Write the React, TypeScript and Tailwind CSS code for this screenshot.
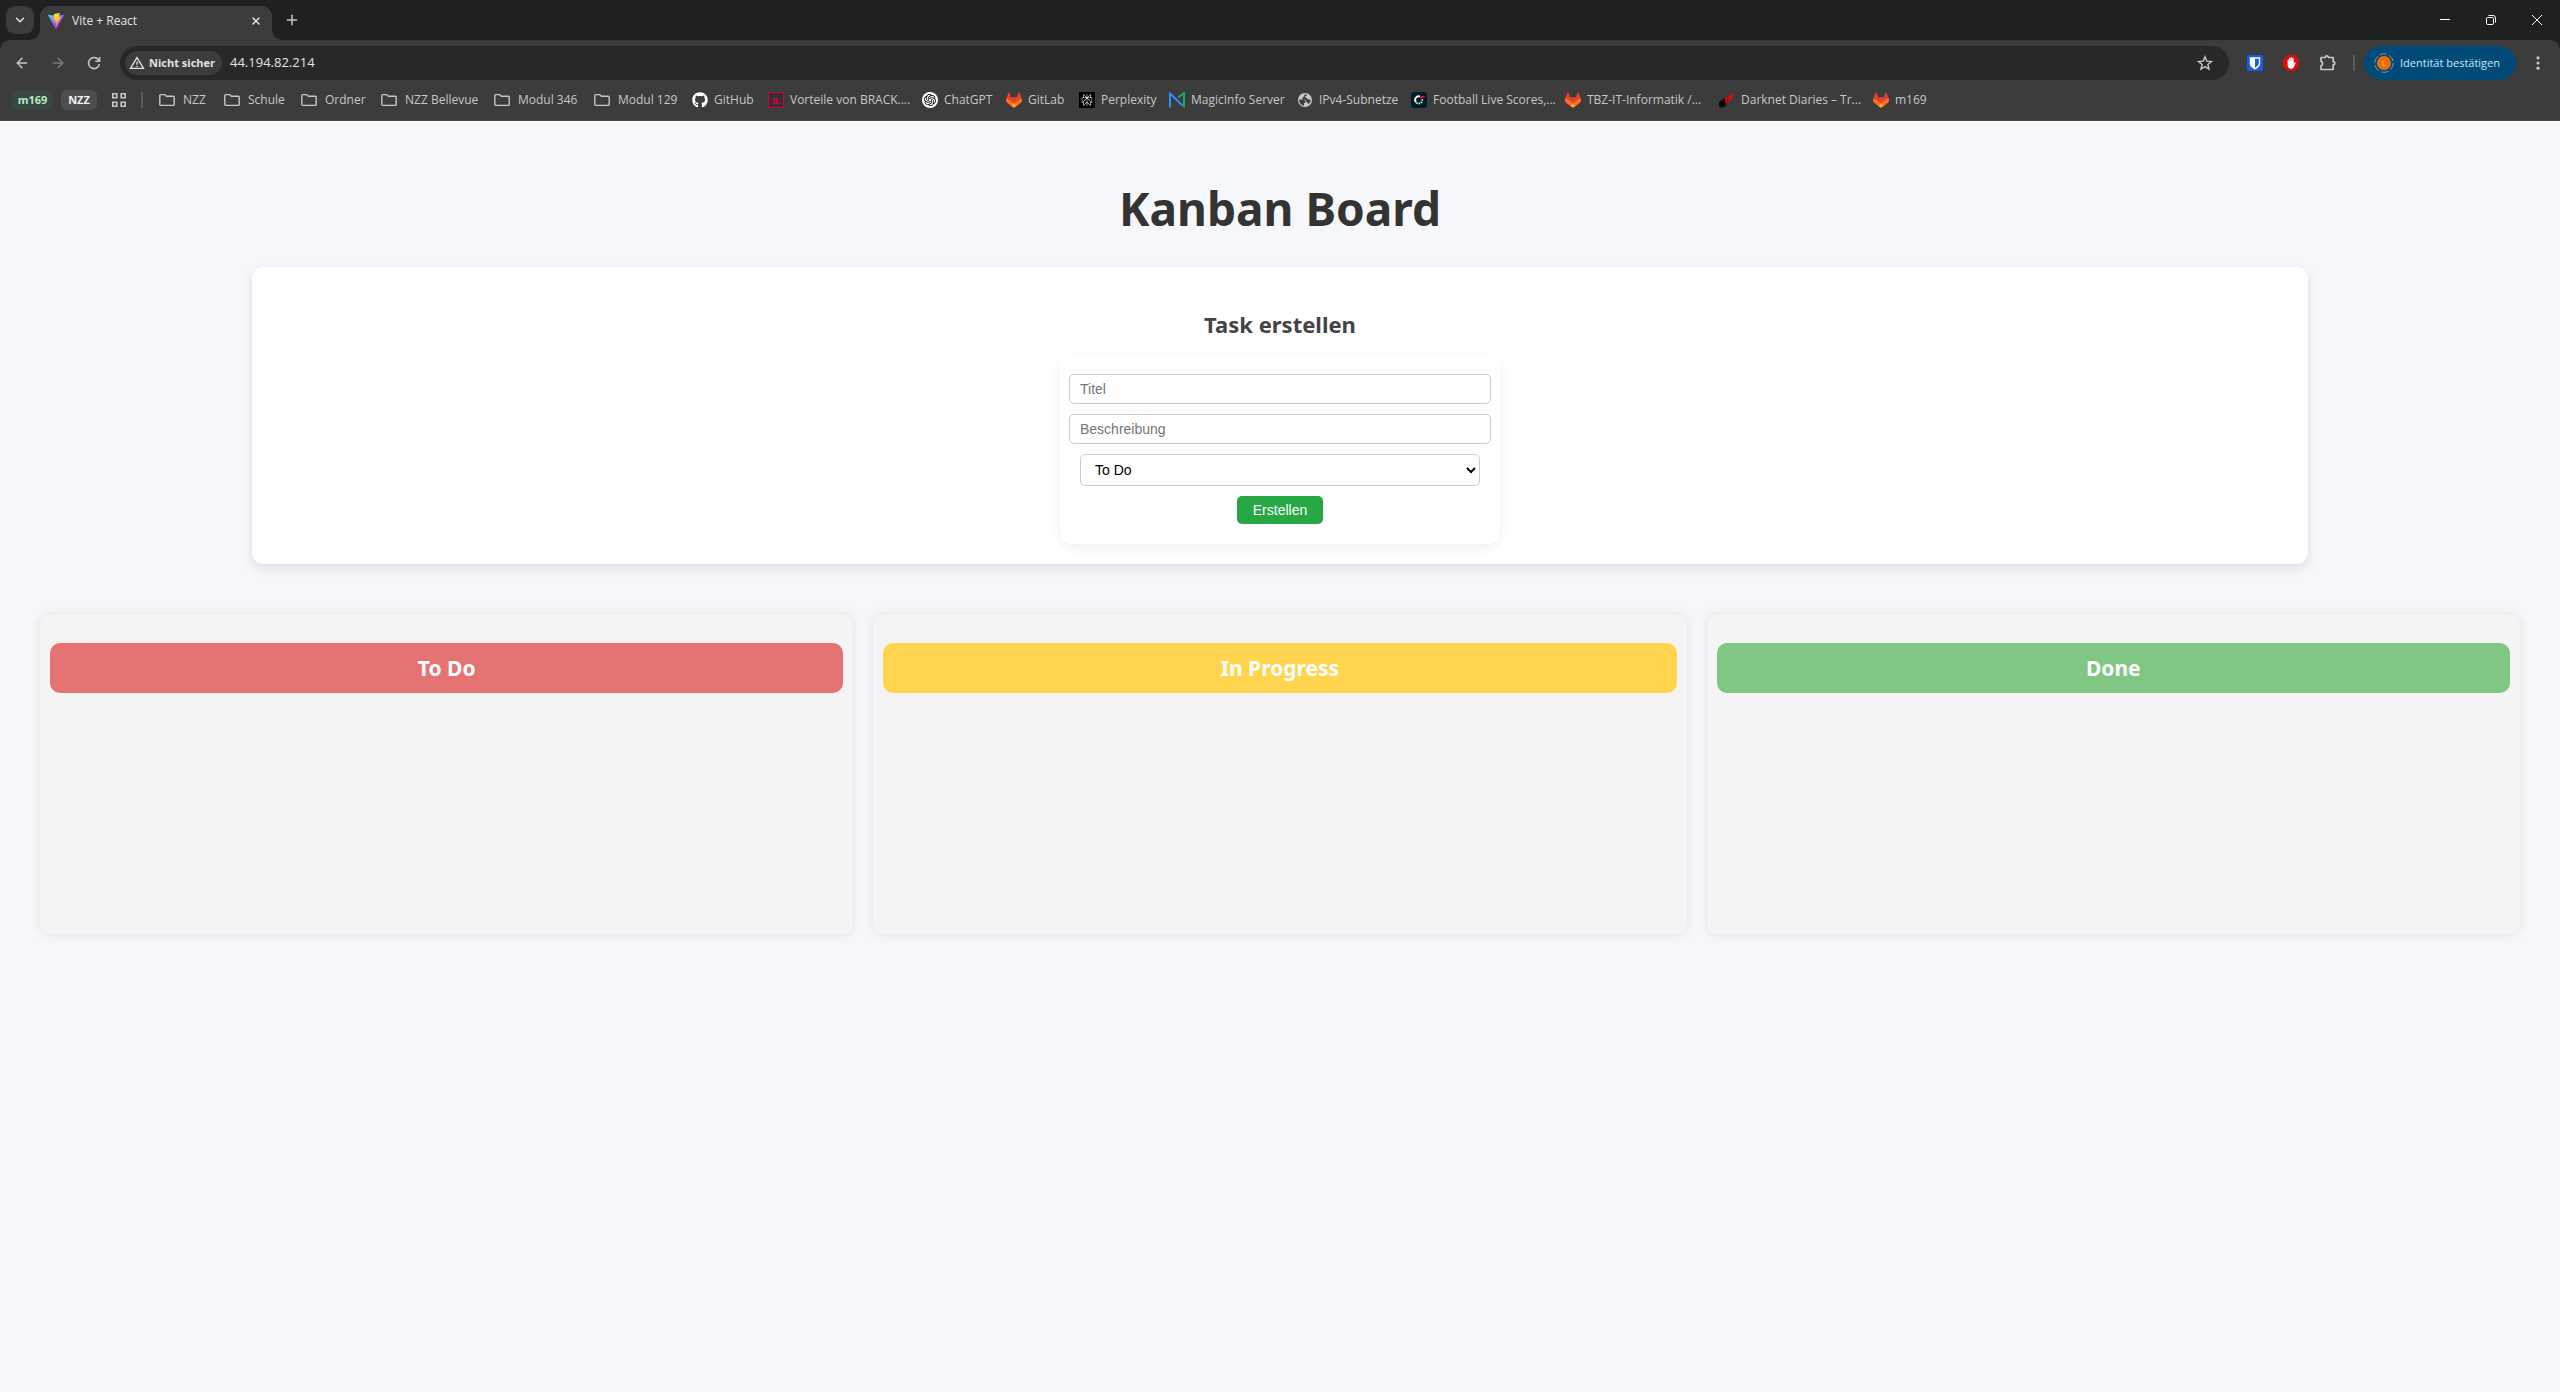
import React, { useState } from "react";
import { ArrowLeft, ArrowRight, ChevronDown, Plus, X } from "lucide-react";
import { FaGithub } from "react-icons/fa";
import { SiOpenai, SiPerplexity } from "react-icons/si";

function ViteLogo() {
  return (
    <svg viewBox="0 0 256 257" className="size-4 shrink-0" aria-hidden="true">
      <defs>
        <linearGradient id="viteA" x1="-.8%" x2="57.6%" y1="7.7%" y2="78.4%">
          <stop offset="0%" stopColor="#41D1FF" />
          <stop offset="100%" stopColor="#BD34FE" />
        </linearGradient>
        <linearGradient id="viteB" x1="43.4%" x2="50.3%" y1="2.2%" y2="89%">
          <stop offset="0%" stopColor="#FFEA83" />
          <stop offset="8.3%" stopColor="#FFDD35" />
          <stop offset="100%" stopColor="#FFA800" />
        </linearGradient>
      </defs>
      <path
        fill="url(#viteA)"
        d="M255.153 37.938L134.897 252.976c-2.483 4.44-8.862 4.466-11.382.048L.875 37.958c-2.746-4.814 1.371-10.646 6.827-9.67l120.385 21.517a6.537 6.537 0 0 0 2.322-.004l117.867-21.483c5.438-.991 9.574 4.796 6.877 9.62Z"
      />
      <path
        fill="url(#viteB)"
        d="M185.432.063L96.44 17.501a3.268 3.268 0 0 0-2.634 3.014l-5.474 92.456a3.268 3.268 0 0 0 3.997 3.378l24.777-5.718c2.318-.535 4.413 1.507 3.936 3.838l-7.361 36.047c-.495 2.426 1.782 4.5 4.151 3.78l15.304-4.649c2.372-.72 4.652 1.36 4.15 3.788l-11.698 56.621c-.732 3.542 3.979 5.473 5.943 2.437l1.313-2.028l72.516-144.72c1.215-2.423-.88-5.186-3.54-4.672l-25.505 4.922c-2.396.462-4.435-1.77-3.759-4.114l16.646-57.705c.677-2.35-1.37-4.583-3.769-4.113Z"
      />
    </svg>
  );
}

function FolderIcon() {
  return (
    <svg viewBox="0 0 16 16" className="size-4 shrink-0" fill="none" stroke="#c7c7c7" strokeWidth="1.4" aria-hidden="true">
      <path d="M.8 3.6c0-.6.4-1 1-1h3.9l1.7 1.7h6.8c.6 0 1 .4 1 1v7.1c0 .6-.4 1-1 1H1.800c-.6 0-1-.4-1-1Z" />
    </svg>
  );
}

function GitlabIcon() {
  return (
    <svg viewBox="0 0 24 24" className="size-4 shrink-0" aria-hidden="true">
      <path fill="#e24329" d="m23.600 9.590-.03-.08L20.300.98a.85.85 0 0 0-1.63.09l-2.200 6.740H7.530L5.330 1.070A.85.85 0 0 0 3.700.98L.430 9.500l-.03.090a6.070 6.070 0 0 0 2.010 7.010l9.590 7.200 9.590-7.200a6.070 6.070 0 0 0 2.010-7.010Z" />
      <path fill="#fc6d26" d="M23.600 9.590a11 11 0 0 0-4.440 2L12 17l4.500 3.500 5.090-3.900a6.070 6.070 0 0 0 2.010-7.010ZM.400 9.590a11 11 0 0 1 4.440 2L12 17l-4.500 3.500-5.090-3.900A6.070 6.070 0 0 1 .4 9.590Z" />
      <path fill="#fca326" d="M12 17l-4.560 3.440L12 23.800l4.560-3.360Z" />
    </svg>
  );
}

function BrackIcon() {
  return (
    <svg viewBox="0 0 16 16" className="size-4 shrink-0" aria-hidden="true">
      <rect x=".5" y=".5" width="15" height="15" fill="#33303a" stroke="#d5003f" />
      <text x="4" y="11.500" fontSize="9" fontWeight="700" fill="#d5003f">B.</text>
    </svg>
  );
}

function MagicIcon() {
  return (
    <svg viewBox="0 0 16 16" className="size-4 shrink-0" fill="none" aria-hidden="true">
      <path stroke="#1faa55" strokeWidth="2" d="M9 5.500 15 1v14.500" />
      <path stroke="#2f8bff" strokeWidth="2" d="M1 15.500V1.500l12.500 12" />
    </svg>
  );
}

function GlobeIcon() {
  return (
    <svg viewBox="0 0 16 16" className="size-4 shrink-0" aria-hidden="true">
      <circle cx="8" cy="8" r="7" fill="#c7c9cc" />
      <path fill="#3c3c3c" d="M2.200 7.400H6c1.600 0 2.600.9 2.600 2.200 0 .9-.6 1.300-1.500 1.500v2.500C4.200 13.300 2 10.700 2.200 7.400ZM7.400 2.600h2.400c.1 1-.5 1.600-1.400 1.700v1.400c1.700 0 2.200.8 2.300 1.900h2.900c.1 2-.8 3.700-2.300 4.800-.1-1.500-.7-2-1.900-2.100 0-2-.9-3-2.900-3H5.300c0-2.100.9-2.600 2.100-2.700Z" />
    </svg>
  );
}

function FootballIcon() {
  return (
    <svg viewBox="0 0 16 16" className="size-4 shrink-0" fill="none" aria-hidden="true">
      <rect width="16" height="16" rx="3" fill="#001e28" />
      <path stroke="#fff" strokeWidth="1.800" d="M9 4.500A3.600 3.600 0 0 0 5 10.200" />
      <path stroke="#fff" strokeWidth="1.800" strokeDasharray="1.300 1" d="M5.500 10.800A3.600 3.600 0 0 0 11.200 7.500" />
      <path fill="#ff0046" d="m8.600 6.600 1.200-2.600h4.600l-1.200 1.600Z" />
    </svg>
  );
}

function DarknetIcon() {
  return (
    <svg viewBox="0 0 16 16" className="size-4 shrink-0" aria-hidden="true">
      <path fill="#0a0a0a" d="m0 10 6-4 3 4-2 4-5 2-2-2Z" />
      <path fill="#e00b0b" d="m6 6 3-1 1-3 1 2 5-4-3 5 1 0-3 3 .5 2-2.500-1-2 5-.5-4Z" />
      <path fill="#1a1a1a" d="m8 7 2-1-1 3Z" />
    </svg>
  );
}

function ChatGptIcon() {
  return (
    <span className="grid size-4 shrink-0 place-items-center rounded-full bg-white text-black">
      <SiOpenai size={12} aria-hidden="true" />
    </span>
  );
}

function PerplexityIcon() {
  return (
    <span className="grid size-4 shrink-0 place-items-center bg-black text-[#e8e8e0]">
      <SiPerplexity size={12} aria-hidden="true" />
    </span>
  );
}

const folders = [
  { label: "NZZ", width: "w-[65px]" },
  { label: "Schule", width: "w-[77px]" },
  { label: "Ordner", width: "w-[80px]" },
  { label: "NZZ Bellevue", width: "w-[113px]" },
  { label: "Modul 346", width: "w-[100px]" },
  { label: "Modul 129", width: "w-[98px]" },
];

const sites = [
  { label: "GitHub", width: "w-[76px]", icon: <FaGithub size={16} className="shrink-0 text-white" aria-hidden="true" /> },
  { label: "Vorteile von BRACK....", width: "w-[154px]", icon: <BrackIcon /> },
  { label: "ChatGPT", width: "w-[84px]", icon: <ChatGptIcon /> },
  { label: "GitLab", width: "w-[73px]", icon: <GitlabIcon /> },
  { label: "Perplexity", width: "w-[90px]", icon: <PerplexityIcon /> },
  { label: "MagicInfo Server", width: "w-[128px]", icon: <MagicIcon /> },
  { label: "IPv4-Subnetze", width: "w-[114px]", icon: <GlobeIcon /> },
  { label: "Football Live Scores,...", width: "w-[154px]", icon: <FootballIcon /> },
  { label: "TBZ-IT-Informatik /...", width: "w-[154px]", icon: <GitlabIcon /> },
  { label: "Darknet Diaries – Tr...", width: "w-[154px]", icon: <DarknetIcon /> },
  { label: "m169", width: "w-[60px]", icon: <GitlabIcon /> },
];

function TabStrip() {
  return (
    <div className="flex h-10 items-end bg-[#1f2020] pl-1.5">
      <button aria-label="Tabs durchsuchen" className="mb-1.5 grid size-7 place-items-center rounded-[9px] bg-[#3c3c3c] text-[#e3e3e3]">
        <ChevronDown size={14} strokeWidth={2.5} />
      </button>
      <div className="relative ml-1.5 flex h-[34px] w-[232px] items-center rounded-t-[10px] bg-[#3c3c3c] pr-2.5 pb-1 pl-2">
        <svg viewBox="0 0 10 10" className="absolute bottom-0 -left-2.5 size-2.5" aria-hidden="true">
          <path fill="#3c3c3c" d="M10 0v10H0A10 10 0 0 0 10 0Z" />
        </svg>
        <svg viewBox="0 0 10 10" className="absolute -right-2.5 bottom-0 size-2.5" aria-hidden="true">
          <path fill="#3c3c3c" d="M0 0v10h10A10 10 0 0 1 0 0Z" />
        </svg>
        <ViteLogo />
        <span className="ml-2 flex-1 text-xs text-[#e3e3e3]">Vite + React</span>
        <button aria-label="Tab schließen" className="text-[#e3e3e3]">
          <X size={12} strokeWidth={3} />
        </button>
      </div>
      <button aria-label="Neuer Tab" className="mb-3 ml-3 text-[#c7c7c7]">
        <Plus size={16} strokeWidth={2.2} />
      </button>
      <div className="ml-auto flex h-10 text-white">
        <button aria-label="Minimieren" className="grid w-[46px] place-items-center">
          <svg viewBox="0 0 10 10" className="size-2.5" stroke="currentColor"><path d="M0 4.500h10" /></svg>
        </button>
        <button aria-label="Verkleinern" className="grid w-[46px] place-items-center">
          <svg viewBox="0 0 10 10" className="size-2.5 overflow-visible" fill="none" stroke="currentColor">
            <rect x=".5" y="2.500" width="7" height="7" rx="1.200" />
            <path d="M2.500.5h4.500a2.500 2.500 0 0 1 2.500 2.500v4.500" />
          </svg>
        </button>
        <button aria-label="Schließen" className="grid w-[46px] place-items-center">
          <svg viewBox="0 0 10 10" className="size-2.5" stroke="currentColor"><path d="m0 0 10 10M10 0 0 10" /></svg>
        </button>
      </div>
    </div>
  );
}

function Toolbar() {
  return (
    <div className="flex h-[46px] items-center pr-3.5 pl-3.5">
      <button aria-label="Zurück" className="text-[#c7c7c7]"><ArrowLeft size={16} strokeWidth={2.2} /></button>
      <button aria-label="Vorwärts" className="ml-5 text-[#7a7a7a]"><ArrowRight size={16} strokeWidth={2.2} /></button>
      <button aria-label="Neu laden" className="ml-5 text-[#c7c7c7]">
        <svg viewBox="0 0 16 16" className="size-4" fill="none" stroke="currentColor" strokeWidth="1.600" aria-hidden="true">
          <path d="M13.400 9.200A5.500 5.500 0 1 1 12.300 4.600L13.500 6M13.600 2v4.300H9.300" />
        </svg>
      </button>
      <div className="ml-[18px] flex h-[34px] flex-1 items-center rounded-full bg-[#282828] pr-4 pl-[5px]">
        <button className="flex h-6 w-[97px] items-center gap-1 rounded-full bg-[#3c3c3c] pl-1 text-[11px] font-bold whitespace-nowrap text-[#e3e3e3]">
          <svg viewBox="0 0 16 16" className="size-4 shrink-0" fill="none" stroke="currentColor" strokeWidth="1.300" aria-hidden="true">
            <path d="M8 2.600 14.500 13.400H1.500ZM8 6.500v3.300M8 10.800v1.300" />
          </svg>
          Nicht sicher
        </button>
        <input aria-label="Adresse" defaultValue="44.194.82.214" className="ml-2 min-w-0 flex-1 bg-transparent text-[13px] text-[#e3e3e3] outline-none" />
        <button aria-label="Lesezeichen hinzufügen" className="text-[#c7c7c7]">
          <svg viewBox="0 0 16 16" className="size-4" fill="none" stroke="currentColor" strokeWidth="1.400" aria-hidden="true">
            <path d="m8 1.800 1.800 4.300 4.700.4-3.600 3 1.100 4.600L8 11.600l-4 2.500 1.100-4.600-3.600-3 4.700-.4Z" />
          </svg>
        </button>
      </div>
      <button aria-label="Bitwarden" className="ml-[18px]">
        <svg viewBox="0 0 16 16" className="size-4" aria-hidden="true">
          <rect width="16" height="16" rx="2" fill="#175ddc" />
          <path fill="#fff" d="M2.800 2.200h10.400v6.200c0 2.800-2.600 4.700-5.200 6-2.600-1.300-5.200-3.200-5.200-6Z" />
          <path fill="#175ddc" d="M8 3.700h3.800v4.600c0 1.800-1.600 3.200-3.800 4.400Z" />
        </svg>
      </button>
      <button aria-label="AdBlock" className="ml-5">
        <svg viewBox="0 0 16 16" className="size-4" aria-hidden="true">
          <path fill="#e50b0b" d="M4.700 0h6.600L16 4.700v6.600L11.300 16H4.700L0 11.300V4.700Z" />
          <path fill="#fff" d="M4.600 5.200c0-.9 1.300-.9 1.300 0v1.900h.2V3.500c0-1 1.400-1 1.400 0V6.500h.2V2.900c0-1 1.400-1 1.400 0v3.700h.2V3.700c0-1 1.400-1 1.400 0v5l.4-.9c.5-.9 1.900-.5 1.400.6l-1.500 3.400c-.5 1.200-1.400 1.900-2.800 1.900-2.200 0-3.600-1.200-3.600-3.400Z" />
        </svg>
      </button>
      <button aria-label="Erweiterungen" className="ml-5 text-[#c7c7c7]">
        <svg viewBox="0 0 18 18" className="size-[18px]" fill="none" stroke="currentColor" strokeWidth="1.700" strokeLinejoin="round" aria-hidden="true">
          <path d="M2 3.500h4.200a1.600 1.600 0 0 1 3.200 0h4.800v4.200a1.600 1.600 0 0 1 0 3.200v4.600H2v-3.700a2.300 2.300 0 0 0 0-4.400Z" />
        </svg>
      </button>
      <span className="ml-4 h-4 w-0.5 bg-[#5c5c5c]" />
      <button className="ml-[9px] flex h-[34px] w-[152px] items-center rounded-full bg-[#004a77] pl-2.5 text-[11px] whitespace-nowrap text-[#c2e7ff]">
        <svg viewBox="0 0 20 20" className="mr-1.5 size-5 shrink-0" aria-hidden="true">
          <circle cx="10" cy="10" r="9.300" fill="none" stroke="#7f99a8" strokeWidth="1" strokeDasharray="7.300 2.440" />
          <circle cx="10" cy="10" r="7" fill="#ef6c00" />
          <text x="10" y="13" textAnchor="middle" fontSize="8" fill="#ffe0b2">L</text>
        </svg>
        Identität bestätigen
      </button>
      <button aria-label="Menü" className="ml-3.5 text-[#c7c7c7]">
        <svg viewBox="0 0 16 16" className="size-4" fill="currentColor" aria-hidden="true">
          <circle cx="8" cy="2.800" r="1.600" /><circle cx="8" cy="8" r="1.600" /><circle cx="8" cy="13.200" r="1.600" />
        </svg>
      </button>
    </div>
  );
}

function BookmarksBar() {
  return (
    <nav aria-label="Lesezeichen" className="flex h-[35px] items-center overflow-hidden border-b border-[#474747] pb-1.5 pl-3 text-xs whitespace-nowrap text-[#c7c7c7]">
      <button className="h-5 w-[41px] shrink-0 rounded-md bg-[#37493e] text-[11px] font-bold text-[#b9e8c4]">m169</button>
      <button className="ml-2 h-5 w-9 shrink-0 rounded-md bg-[#4d4e51] text-[11px] font-bold text-[#f1f3f4]">NZZ</button>
      <button aria-label="Tab-Gruppen" className="ml-[15px] shrink-0">
        <svg viewBox="0 0 14 14" className="size-3.5" fill="none" stroke="currentColor" strokeWidth="1.600" aria-hidden="true">
          <path d="M.8.8h4v4h-4ZM9.200.8h4v4h-4ZM.8 9.200h4v4h-4ZM9.200 9.200h4v4h-4Z" />
        </svg>
      </button>
      <span className="mr-4 ml-[15px] h-4 w-0.5 shrink-0 bg-[#5c5c5c]" />
      {folders.map((f) => (
        <button key={f.label} className={`flex shrink-0 items-center gap-2 ${f.width}`}>
          <FolderIcon />
          {f.label}
        </button>
      ))}
      {sites.map((s, i) => (
        <a key={i} href="#" className={`flex shrink-0 items-center gap-1.5 ${s.width}`}>
          {s.icon}
          {s.label}
        </a>
      ))}
    </nav>
  );
}

const columns = [
  { title: "To Do", color: "bg-[#e57373]" },
  { title: "In Progress", color: "bg-[#ffd54f]" },
  { title: "Done", color: "bg-[#81c784]" },
];

function TaskForm() {
  const [status, setStatus] = useState("To Do");
  const field = "h-[30px] w-[422px] rounded-[5px] border border-[#ccc] bg-white px-2.5 placeholder:text-[#757575]";
  return (
    <form
      onSubmit={(e) => e.preventDefault()}
      className='mx-auto flex w-[440px] flex-col items-center gap-2.5 rounded-xl bg-white py-5 font-["Liberation_Sans",Arial,sans-serif] text-sm shadow-[0_4px_12px_rgba(0,0,0,0.06)]'
    >
      <input aria-label="Titel" placeholder="Titel" className={field} />
      <input aria-label="Beschreibung" placeholder="Beschreibung" className={field} />
      <select
        aria-label="Status"
        value={status}
        onChange={(e) => setStatus(e.target.value)}
        className="h-8 w-[400px] rounded-[5px] border border-[#ccc] bg-white px-2.5 text-black"
      >
        {columns.map((c) => (
          <option key={c.title}>{c.title}</option>
        ))}
      </select>
      <button type="submit" className="h-7 rounded-[5px] bg-[#28a745] px-4 text-white">Erstellen</button>
    </form>
  );
}

export default function App() {
  return (
    <div className='flex min-h-screen flex-col bg-[#f5f7fb] font-["Segoe_UI","Open_Sans",sans-serif]'>
      <header className="bg-[#1f2020]">
        <TabStrip />
        <div className="rounded-t-[10px] bg-[#3c3c3c]">
          <Toolbar />
          <BookmarksBar />
        </div>
      </header>
      <main className='px-10 pt-[52px] font-["Segoe_UI","Noto_Sans",sans-serif]'>
        <h1 className="text-center text-[46px] leading-[70px] font-bold text-[#333]">Kanban Board</h1>
        <section className="mx-53 mt-6 rounded-xl bg-white px-5 pt-[41px] pb-5 shadow-[0_4px_12px_rgba(0,0,0,0.1)]">
          <h2 className="mb-3.5 text-center text-[22px] leading-8 font-bold text-[#444]">Task erstellen</h2>
          <TaskForm />
        </section>
        <div className="mt-[50px] grid grid-cols-3 gap-5">
          {columns.map((c) => (
            <section key={c.title} className="min-h-80 rounded-[10px] bg-[#f4f4f4] px-2.5 pt-[29px] shadow-[0_0_10px_rgba(0,0,0,0.1)]">
              <h2 className={`rounded-[10px] py-2.5 text-center text-[21px] leading-[30px] font-bold text-white ${c.color}`}>{c.title}</h2>
            </section>
          ))}
        </div>
      </main>
    </div>
  );
}
